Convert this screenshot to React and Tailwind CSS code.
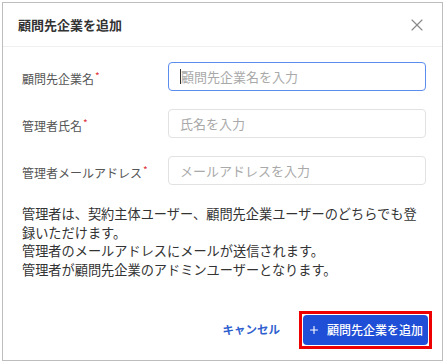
import React from 'react';
import { X, Plus } from 'lucide-react';

const fields = [
  { label: '顧問先企業名', placeholder: '顧問先企業名を入力', focused: true },
  { label: '管理者氏名', placeholder: '氏名を入力' },
  { label: '管理者メールアドレス', placeholder: 'メールアドレスを入力' },
];

export default function App() {
  return (
    <div className="w-[445px] h-[363px] bg-white p-[2px]" style={{ fontFamily: '"Noto Sans CJK JP", "Noto Sans", sans-serif' }}>
      <div className="h-full flex flex-col bg-white border border-[#bdbdbd]">
        {/* header */}
        <div className="h-[44px] flex items-center justify-between pl-[15px] pr-[15px] border-b border-[#efefef] shrink-0">
          <div className="text-[13px] font-bold text-[#333]">顧問先企業を追加</div>
          <X size={20} strokeWidth={1.4} className="text-[#8a8a8a]" />
        </div>

        {/* body */}
        <div className="pl-[19px] pr-[16px] pt-[15px]">
          <div className="flex flex-col gap-[18px]">
            {fields.map((f) => (
              <div key={f.label} className="flex items-center">
                <div className="w-[146px] pt-[4px] text-[12px] text-[#555] flex items-start">
                  <span>{f.label}</span>
                  <span className="text-[#e0303a] text-[10px] leading-none ml-[1px] mt-[1px]">*</span>
                </div>
                <div className={`flex-1 h-[29px] rounded-[4px] border flex items-center pl-[11px] ${f.focused ? 'border-[#5b8def]' : 'border-[#e2e2e2]'}`}>
                  {f.focused && <span className="w-[1px] h-[15px] bg-[#333]" />}
                  <span className="text-[13px] text-[#a9a9a9]">{f.placeholder}</span>
                </div>
              </div>
            ))}
          </div>

          <div className="mt-[20px] pr-[6px] text-[13.2px] leading-[18.5px] text-[#333]">
            <p>管理者は、契約主体ユーザー、顧問先企業ユーザーのどちらでも登録いただけます。</p>
            <p>管理者のメールアドレスにメールが送信されます。</p>
            <p>管理者が顧問先企業のアドミンユーザーとなります。</p>
          </div>
        </div>

        {/* footer */}
        <div className="mt-auto flex justify-end items-center gap-[19px] pr-[10px] pb-[11px]">
          <button className="text-[11.5px] font-bold text-[#2f5fcf]">キャンセル</button>
          <div className="border-[3px] border-[#ee0000] p-[1px]">
            <button className="w-[125px] h-[30px] rounded-[4px] bg-[#1f4fd6] text-white text-[12px] font-medium flex items-center justify-center gap-[7px]">
              <Plus size={12} strokeWidth={2.2} />
              <span>顧問先企業を追加</span>
            </button>
          </div>
        </div>
      </div>
    </div>
  );
}
